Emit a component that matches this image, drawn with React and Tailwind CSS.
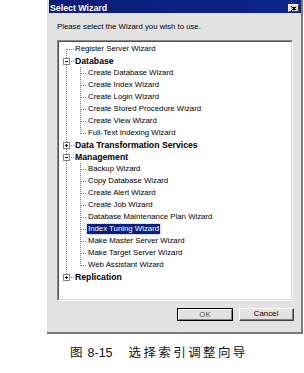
import React from "react";

const rows = [
  { level: 0, label: "Register Server Wizard", first: true },
  { level: 0, label: "Database", bold: true, box: "minus" },
  { level: 1, label: "Create Database Wizard" },
  { level: 1, label: "Create Index Wizard" },
  { level: 1, label: "Create Login Wizard" },
  { level: 1, label: "Create Stored Procedure Wizard" },
  { level: 1, label: "Create View Wizard" },
  { level: 1, label: "Full-Text Indexing Wizard", lastChild: true },
  { level: 0, label: "Data Transformation Services", bold: true, box: "plus" },
  { level: 0, label: "Management", bold: true, box: "minus" },
  { level: 1, label: "Backup Wizard" },
  { level: 1, label: "Copy Database Wizard" },
  { level: 1, label: "Create Alert Wizard" },
  { level: 1, label: "Create Job Wizard" },
  { level: 1, label: "Database Maintenance Plan Wizard" },
  { level: 1, label: "Index Tuning Wizard", selected: true },
  { level: 1, label: "Make Master Server Wizard" },
  { level: 1, label: "Make Target Server Wizard" },
  { level: 1, label: "Web Assistant Wizard", lastChild: true },
  { level: 0, label: "Replication", bold: true, box: "plus", last: true },
];

const G = "#808080";

function Connector({ r }) {
  if (r.level === 0) {
    return (
      <svg width="15" height="12" className="shrink-0" shapeRendering="crispEdges">
        <line x1="7.5" x2="7.5" y1={r.first ? 6 : 0} y2={r.last ? 7 : 12} stroke={G} strokeDasharray="1 1" />
        <line x1="8" x2="15" y1="6.5" y2="6.5" stroke={G} strokeDasharray="1 1" />
        {r.box && (
          <g>
            <rect x="4.5" y="3.5" width="6" height="6" fill="white" stroke={G} />
            <line x1="6" x2="9" y1="6.5" y2="6.5" stroke="#000" />
            {r.box === "plus" && <line x1="7.5" x2="7.5" y1="5" y2="8" stroke="#000" />}
          </g>
        )}
      </svg>
    );
  }
  return (
    <svg width="28" height="12" className="shrink-0" shapeRendering="crispEdges">
      <line x1="7.5" x2="7.5" y1="0" y2="12" stroke={G} strokeDasharray="1 1" />
      <line x1="21.5" x2="21.5" y1="0" y2={r.lastChild ? 7 : 12} stroke={G} strokeDasharray="1 1" />
      <line x1="22" x2="28" y1="6.5" y2="6.5" stroke={G} strokeDasharray="1 1" />
    </svg>
  );
}

function Row({ r }) {
  return (
    <div className="flex items-center h-[12px]">
      <Connector r={r} />
      <span
        className={
          "h-[10px] flex items-center px-[1px] whitespace-nowrap leading-none " +
          (r.bold ? "text-[8.7px] font-bold " : "text-[7.8px] ") +
          (r.selected ? "bg-[#0b1f7c] text-white outline outline-1 outline-dotted outline-[#c0c0ff]" : "text-black")
        }
      >
        {r.label}
      </span>
    </div>
  );
}

export default function App() {
  return (
    <div
      className="w-[304px] h-[373px] bg-white overflow-hidden"
      style={{ fontFamily: '"Liberation Sans", Arial, "Noto Sans CJK SC", sans-serif' }}
    >
      <div className="ml-[47px] w-[256px] h-[334px] bg-[#e2e2e2] border-r-2 border-b-2 border-[#7a7a7a] pl-[2px] flex flex-col">
        {/* title bar */}
        <div className="h-[13px] w-[252px] bg-gradient-to-r from-[#0a1c78] to-[#0e2488] flex items-start justify-between pl-[1px] pr-[2px]">
          <span className="text-white font-bold text-[8.8px] leading-none mt-[4px]">Select Wizard</span>
          <div className="mt-[4px] w-[11px] h-[8px] bg-[#d8d8d8] border-t border-l border-white border-r border-b border-r-[#404040] border-b-[#404040] flex items-center justify-center">
            <svg width="6" height="5" shapeRendering="crispEdges">
              <path d="M0.5 0.5 L5.5 4.5 M5.5 0.5 L0.5 4.5" stroke="#000" strokeWidth="1.2" fill="none" />
            </svg>
          </div>
        </div>
        <div className="pl-[8px] mt-[9px] h-[10px] flex items-center text-[7.8px] leading-none text-black">
          Please select the Wizard you wish to use.
        </div>
        {/* tree */}
        <div className="ml-[8px] mt-[8px] w-[236px] h-[261px] border-t border-l border-[#8a8a8a] border-r border-b border-r-white border-b-white">
          <div className="w-full h-full bg-white border-t border-l border-[#505050] border-r border-b border-r-[#d8d8d8] border-b-[#d8d8d8] pt-[1px]">
            {rows.map((r, i) => (
              <Row key={i} r={r} />
            ))}
          </div>
        </div>
        {/* buttons */}
        <div className="mt-[7px] flex justify-end gap-[6px] pr-[7px]">
          <div className="w-[56px] h-[13px] border border-black">
            <div className="w-full h-full border-t border-l border-white border-r border-b border-r-[#808080] border-b-[#808080] flex items-center justify-center text-[7.8px] leading-none text-[#555]">
              OK
            </div>
          </div>
          <div className="w-[55px] h-[13px] border-t border-l border-white border-r border-b border-r-[#404040] border-b-[#404040]">
            <div className="w-full h-full border-r border-b border-r-[#808080] border-b-[#808080] flex items-center justify-center text-[7.8px] leading-none text-black">
              Cancel
            </div>
          </div>
        </div>
      </div>
      {/* caption */}
      <div
        className="mt-[12px] pl-[70px] h-[14px] flex items-center text-[12.5px] leading-none text-[#111]"
        style={{ fontFamily: '"Liberation Sans", "Noto Sans CJK SC", sans-serif' }}
      >
        <span>图</span>
        <span className="ml-[5px]">8-15</span>
        <span className="ml-[16px] tracking-[2.4px]">选择索引调整向导</span>
      </div>
    </div>
  );
}
